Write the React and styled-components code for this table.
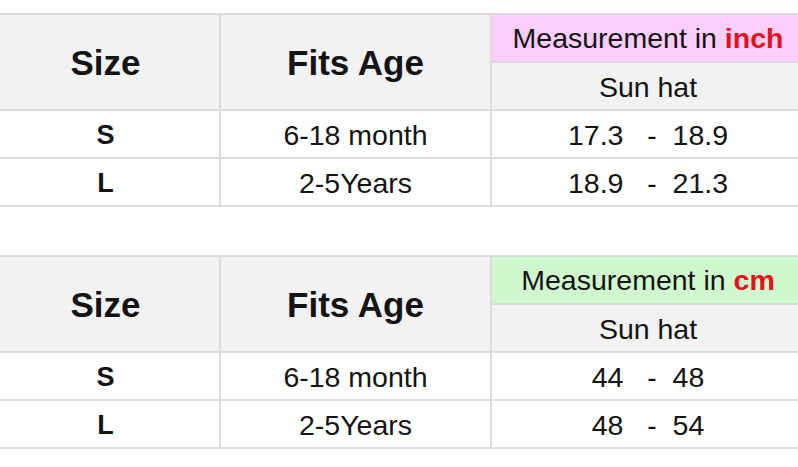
import React from "react";
import styled, { createGlobalStyle } from "styled-components";

const GlobalStyle = createGlobalStyle`
  body {
    margin: 0;
    background: #fff;
    font-family: "Liberation Sans", Arial, sans-serif;
    color: #141414;
  }
`;

const Page = styled.div`
  display: flex;
  flex-direction: column;
  gap: 48px;
  padding-top: 13px;
  margin-left: -10px;
`;

const Table = styled.table`
  width: 814px;
  border-collapse: collapse;
  table-layout: fixed;
`;

const Cell = styled.td`
  border: 2px solid #dcdcdc;
  height: ${(p) => (p.$low ? "43px" : "46px")};
  padding: ${(p) => (p.$low ? "3px 0 0" : "0")};
  text-align: center;
  vertical-align: middle;
  font-size: 28.5px;
  line-height: 1;
  background: ${(p) => p.$bg || "#fff"};
  white-space: pre;
`;

const SizeCell = styled(Cell)`
  font-size: 27px;
  font-weight: bold;
`;

const HeadCell = styled(Cell)`
  font-size: 35px;
  font-weight: bold;
  background: #f2f2f2;
`;

const Unit = styled.span`
  color: #e5101c;
  font-weight: bold;
`;

const SizeTable = ({ unit, tint, rows }) => (
  <Table>
    <colgroup>
      <col style={{ width: 229 }} />
      <col style={{ width: 271 }} />
      <col style={{ width: 314 }} />
    </colgroup>
    <tbody>
      <tr>
        <HeadCell rowSpan={2}>Size</HeadCell>
        <HeadCell rowSpan={2}>Fits Age</HeadCell>
        <Cell $bg={tint}>
          Measurement in <Unit>{unit}</Unit>
        </Cell>
      </tr>
      <tr>
        <Cell $bg="#f2f2f2" $low>Sun hat</Cell>
      </tr>
      {rows.map((r) => (
        <tr key={r[0]}>
          <SizeCell $low>{r[0]}</SizeCell>
          <Cell $low>{r[1]}</Cell>
          <Cell $low>{r[2]}</Cell>
        </tr>
      ))}
    </tbody>
  </Table>
);

export default function App() {
  return (
    <>
      <GlobalStyle />
      <Page>
        <SizeTable
          unit="inch"
          tint="#fdcefc"
          rows={[
            ["S", "6-18 month", "17.3   -  18.9"],
            ["L", "2-5Years", "18.9   -  21.3"],
          ]}
        />
        <SizeTable
          unit="cm"
          tint="#cff8cf"
          rows={[
            ["S", "6-18 month", "44   -  48"],
            ["L", "2-5Years", "48   -  54"],
          ]}
        />
      </Page>
    </>
  );
}
